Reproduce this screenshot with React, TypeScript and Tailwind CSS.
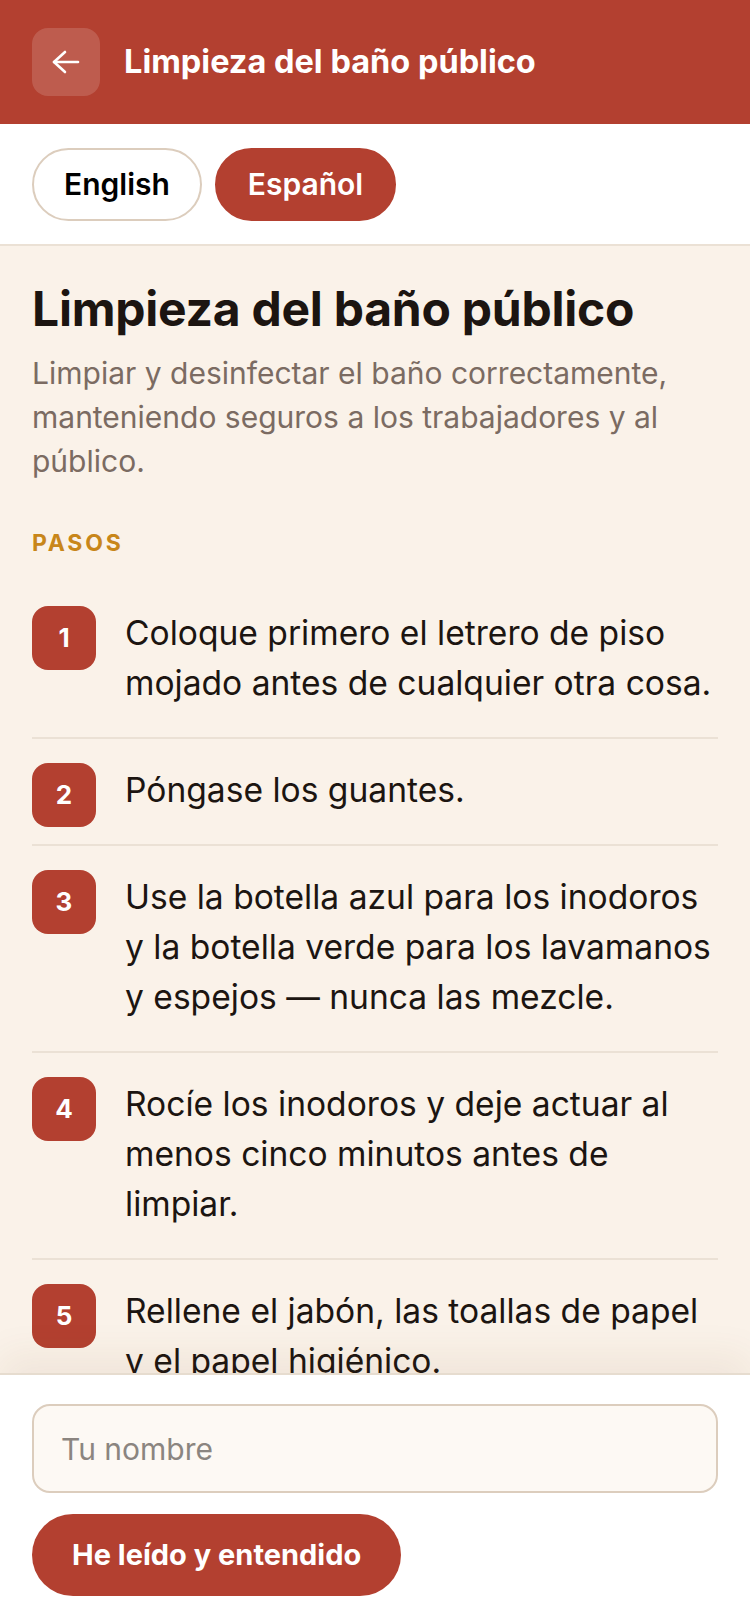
import React from 'react';

const steps: string[] = [
  'Coloque primero el letrero de piso mojado antes de cualquier otra cosa.',
  'Póngase los guantes.',
  'Use la botella azul para los inodoros y la botella verde para los lavamanos y espejos — nunca las mezcle.',
  'Rocíe los inodoros y deje actuar al menos cinco minutos antes de limpiar.',
  'Rellene el jabón, las toallas de papel y el papel higiénico.',
];

const BackArrow: React.FC = () => (
  <svg width="28" height="24" viewBox="0 0 28 24" fill="none" stroke="currentColor" strokeWidth="2.6" strokeLinecap="round" strokeLinejoin="round">
    <path d="M2 12h24" />
    <path d="M13 2 2 12l11 10" />
  </svg>
);

const StepRow: React.FC<{ n: number; text: string }> = ({ n, text }) => (
  <li className="flex items-start gap-[29px] border-b-2 border-[#ebe1d5] pt-6 pb-[29px] last:border-b-0">
    <div className="-mb-[12px] flex h-16 w-16 shrink-0 items-center justify-center rounded-2xl bg-[#b34030] text-[26px] font-bold text-white">
      {n}
    </div>
    <p className="min-w-0 flex-1 pt-[2px] text-[33.6px] leading-[50px] text-[#1c1511]">{text}</p>
  </li>
);

export default function App() {
  return (
    <div className="flex h-screen flex-col overflow-hidden bg-white" style={{ fontFamily: 'Inter, "Noto Sans", sans-serif' }}>
      {/* header */}
      <header className="flex shrink-0 items-center gap-6 bg-[#b34030] px-8 py-7">
        <button className="flex h-[68px] w-[68px] items-center justify-center rounded-2xl bg-white/15 text-white">
          <BackArrow />
        </button>
        <h1 className="text-[32.5px] font-bold text-white">Limpieza del baño público</h1>
      </header>

      {/* language switch */}
      <div className="flex shrink-0 gap-[13px] border-b-2 border-[#ebe1d5] bg-white px-8 pt-6 pb-[23px]">
        <button className="rounded-full border-2 border-[#dccdbd] bg-white px-[30px] py-[14px] text-[30px] font-semibold leading-[41px] text-black">
          English
        </button>
        <button className="rounded-full border-2 border-[#b34030] bg-[#b34030] px-[31px] py-[14px] text-[30px] font-semibold leading-[41px] text-white">
          Español
        </button>
      </div>

      {/* content */}
      <main className="min-h-0 flex-1 overflow-hidden bg-[#faf2e9] px-8 pt-[34px]">
        <h2 className="text-[48px] font-bold leading-[1.2] tracking-[-0.005em] text-[#1c1511]">Limpieza del baño público</h2>
        <p className="mt-[13px] text-[30px] leading-[44px] text-[#7b6b62]">
          Limpiar y desinfectar el baño correctamente, manteniendo seguros a los trabajadores y al público.
        </p>
        <h3 className="mt-[44px] text-[23px] font-bold uppercase leading-[33px] tracking-[0.12em] text-[#c8861a]">Pasos</h3>
        <ol className="mt-[22px]">
          {steps.map((s, i) => (
            <StepRow key={i} n={i + 1} text={s} />
          ))}
        </ol>
      </main>

      {/* footer */}
      <footer className="shrink-0 border-t-2 border-[#e6dccf] bg-white px-8 pt-[29px] pb-7 shadow-[0_-18px_36px_rgba(110,70,30,0.07)]">
        <input
          type="text"
          placeholder="Tu nombre"
          className="block h-[89px] w-full rounded-[18px] border-2 border-[#dccdbd] bg-[#fdf9f4] px-[27px] text-[30px] text-[#1c1511] placeholder:text-[#8b8580] outline-none"
        />
        <button className="mt-[21px] rounded-full bg-[#b34030] px-[40px] py-5 text-[29px] font-bold leading-[42px] text-white">
          He leído y entendido
        </button>
      </footer>
    </div>
  );
}
